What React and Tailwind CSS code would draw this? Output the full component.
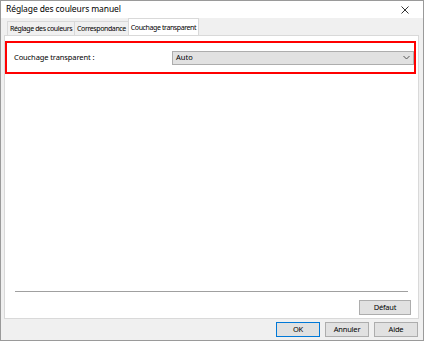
import { useState } from 'react';

const font = { fontFamily: '"Noto Sans", "Open Sans", sans-serif' };

function Button({ children, primary }) {
  return (
    <button
      className={`h-[15px] w-[44px] bg-[#e1e1e1] text-[7.5px] leading-none tracking-[-0.2px] text-black ${
        primary ? 'border border-[#0078d7]' : 'border border-[#adadad]'
      }`}
    >
      {children}
    </button>
  );
}

export default function App() {
  const [tab, setTab] = useState(2);
  const tabs = ['Réglage des couleurs', 'Correspondance', 'Couchage transparent'];

  return (
    <div
      className="flex h-[341px] w-[424px] flex-col border border-[#9a9a9a] bg-[#f0f0f0] text-black"
      style={font}
    >
      {/* Title bar */}
      <div className="flex h-[17px] items-center justify-between bg-white pl-[5px] pr-[14px]">
        <span className="text-[8.5px] tracking-[-0.1px]">Réglage des couleurs manuel</span>
        <svg width="8" height="8" viewBox="0 0 8 8" className="mt-[1px]">
          <path d="M0.5 0.5 L7.5 7.5 M7.5 0.5 L0.5 7.5" stroke="#333" strokeWidth="1" />
        </svg>
      </div>

      {/* Tabs */}
      <div className="flex h-[17px] items-end pl-[7px] pt-[3px]">
        {tabs.map((t, i) => (
          <button
            key={t}
            onClick={() => setTab(i)}
            className={`-ml-px border border-b-0 border-[#d9d9d9] px-[2px] text-[7px] leading-none tracking-[-0.4px] ${
              tab === i ? 'z-10 h-[17px] bg-white' : 'h-[14px] bg-[#f0f0f0]'
            }`}
          >
            {t}
          </button>
        ))}
      </div>

      {/* Panel */}
      <div className="ml-[3px] mr-[4px] flex h-[284px] flex-col border border-[#d9d9d9] bg-white">
        <div className="mr-[2px] mt-[5px] flex h-[33px] items-center border-2 border-[#ff0000] pl-[7px]">
          <span className="w-[158px] text-[7.5px] tracking-[-0.1px]">Couchage transparent :</span>
          <div className="flex h-[14px] flex-1 items-center justify-between border border-[#adadad] bg-[#e1e1e1] pl-[3px] pr-[3px]">
            <span className="text-[7.5px]">Auto</span>
            <svg width="7" height="5" viewBox="0 0 7 5">
              <path d="M0.5 1 L3.5 4 L6.5 1" stroke="#555" strokeWidth="1" fill="none" />
            </svg>
          </div>
        </div>
        <div className="flex-1" />
        <div className="mx-[10px] h-px bg-[#a0a0a0]" />
        <div className="flex justify-end px-[7px] pb-[3px] pt-[8px]">
          <button className="h-[15px] w-[52px] border border-[#adadad] bg-[#e1e1e1] text-[7.5px] leading-none tracking-[-0.2px]">
            Défaut
          </button>
        </div>
      </div>

      {/* Bottom buttons */}
      <div className="flex justify-end gap-[5px] pr-[5px] pt-[3px]">
        <Button primary>OK</Button>
        <Button>Annuler</Button>
        <Button>Aide</Button>
      </div>
    </div>
  );
}
